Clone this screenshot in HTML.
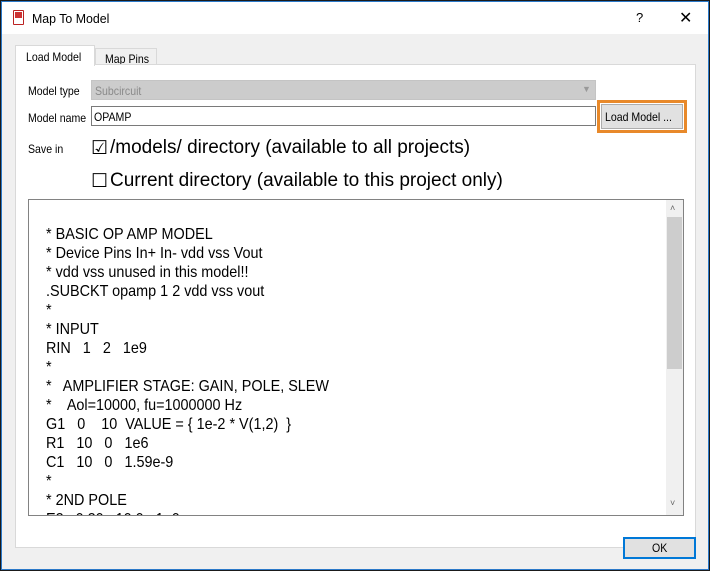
<!DOCTYPE html>
<html><head><style>
*{box-sizing:border-box;margin:0;padding:0}
body{width:710px;height:571px;overflow:hidden;background:#1a1a1a;font-family:"Liberation Sans",sans-serif;position:relative}
.win{position:absolute;left:1px;top:1px;width:708px;height:569px;background:#f0f0f0;border:1px solid #2b79c9}
.title{position:absolute;left:0;top:0;width:706px;height:32px;background:#fff}
.abs{position:absolute}
.s12{font-size:12px;color:#000;transform:scaleX(0.88);transform-origin:left top;white-space:nowrap}
.pane{position:absolute;left:13px;top:62px;width:681px;height:484px;background:#fff;border:1px solid #d9d9d9}
.txt{position:absolute;left:26px;top:197px;width:656px;height:317px;background:#fff;border:1px solid #828282;overflow:hidden}
.lines{position:absolute;left:17px;top:6px;font-size:16px;line-height:19px;white-space:pre;color:#000;transform:scaleX(0.9);transform-origin:left top}
.sb{position:absolute;right:0;top:0;width:17px;height:315px;background:#f0f0f0}
.big{font-size:19px;white-space:nowrap}
</style></head><body>
<div class="win">
<div class="title">
 <div class="abs" style="left:11px;top:8px;width:11px;height:15px;border:1px solid #b22;background:#fff;border-radius:1px"><div style="background:#c33;height:6px;margin:1px"></div></div>
 <div class="abs" style="left:30px;top:9px;font-size:13px;transform:scaleX(0.95);transform-origin:left top;white-space:nowrap">Map To Model</div>
 <div class="abs" style="left:634px;top:8px;font-size:13px">?</div>
 <div class="abs" style="left:677px;top:6px;font-size:16px">✕</div>
</div>
<div class="abs" style="left:13px;top:43px;width:80px;height:21px;background:#fff;border:1px solid #d9d9d9;border-bottom:none;z-index:2"></div>
<div class="abs s12" style="left:24px;top:48px;z-index:3">Load Model</div>
<div class="abs" style="left:93px;top:46px;width:62px;height:17px;background:#f0f0f0;border:1px solid #d9d9d9"></div>
<div class="abs s12" style="left:103px;top:50px">Map Pins</div>
<div class="pane"></div>
<div class="abs s12" style="left:26px;top:82px">Model type</div>
<div class="abs" style="left:89px;top:78px;width:505px;height:20px;background:#ccc;border:1px solid #c4c4c4"></div>
<div class="abs s12" style="left:93px;top:82px;color:#8a8a8a">Subcircuit</div>
<div class="abs" style="left:580px;top:82px;font-size:9px;color:#999">▼</div>
<div class="abs s12" style="left:26px;top:109px">Model name</div>
<div class="abs" style="left:89px;top:104px;width:505px;height:20px;background:#fff;border:1px solid #7a7a7a"></div>
<div class="abs s12" style="left:92px;top:108px">OPAMP</div>
<div class="abs" style="left:595px;top:98px;width:90px;height:33px;border:3px solid #e8892a"></div>
<div class="abs" style="left:599px;top:102px;width:82px;height:25px;background:#e1e1e1;border:1px solid #adadad"></div>
<div class="abs s12" style="left:603px;top:108px">Load Model ...</div>
<div class="abs s12" style="left:26px;top:140px">Save in</div>
<div class="abs big" style="left:89px;top:135px">☑</div>
<div class="abs big" style="left:108px;top:135px">/models/ directory (available to all projects)</div>
<div class="abs big" style="left:89px;top:168px">☐</div>
<div class="abs big" style="left:108px;top:168px">Current directory (available to this project only)</div>
<div class="txt">
<div class="lines">
* BASIC OP AMP MODEL
* Device Pins In+ In- vdd vss Vout
* vdd vss unused in this model!!
.SUBCKT opamp 1 2 vdd vss vout
*
* INPUT
RIN   1   2   1e9
*
*   AMPLIFIER STAGE: GAIN, POLE, SLEW
*    Aol=10000, fu=1000000 Hz
G1   0    10  VALUE = { 1e-2 * V(1,2)  }
R1   10   0   1e6
C1   10   0   1.59e-9
*
* 2ND POLE
E2   0 20   10 0   1e0</div>
<div class="sb">
 <div class="abs" style="left:4px;top:3px;font-size:9px;color:#666">˄</div>
 <div class="abs" style="left:1px;top:17px;width:15px;height:152px;background:#cdcdcd"></div>
 <div class="abs" style="left:4px;top:298px;font-size:9px;color:#666">˅</div>
</div>
</div>
<div class="abs" style="left:621px;top:535px;width:73px;height:22px;background:#e1e1e1;border:2px solid #0078d7"></div>
<div class="abs s12" style="left:650px;top:539px">OK</div>
</div>
</body></html>
